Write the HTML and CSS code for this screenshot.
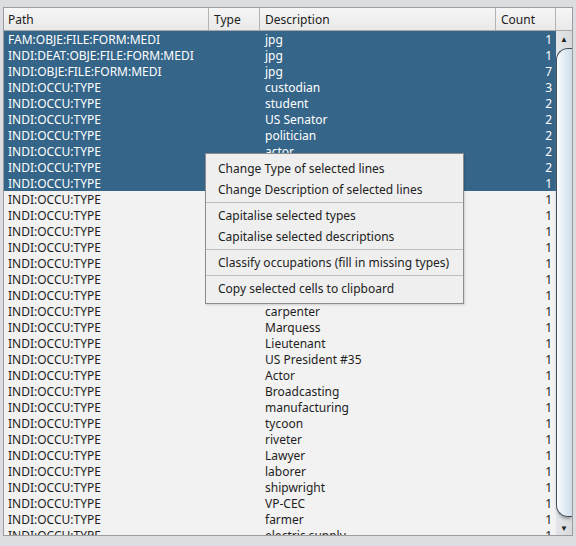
FILE: index.html
```html
<!DOCTYPE html>
<html>
<head>
<meta charset="utf-8">
<link rel="stylesheet" href="styles.css">
</head>
<body>
<div class="frame">
  <div class="header">
    <div class="hcell c-path">Path</div>
    <div class="hcell c-type">Type</div>
    <div class="hcell c-desc">Description</div>
    <div class="hcell c-count">Count</div>
    <div class="hcell c-corner"></div>
  </div>
  <div class="body">
    <div class="rows">
      <div class="row sel"><span class="c-path">FAM:OBJE:FILE:FORM:MEDI</span><span class="c-type"></span><span class="c-desc">jpg</span><span class="c-count">1</span></div>
      <div class="row sel"><span class="c-path">INDI:DEAT:OBJE:FILE:FORM:MEDI</span><span class="c-type"></span><span class="c-desc">jpg</span><span class="c-count">1</span></div>
      <div class="row sel"><span class="c-path">INDI:OBJE:FILE:FORM:MEDI</span><span class="c-type"></span><span class="c-desc">jpg</span><span class="c-count">7</span></div>
      <div class="row sel"><span class="c-path">INDI:OCCU:TYPE</span><span class="c-type"></span><span class="c-desc">custodian</span><span class="c-count">3</span></div>
      <div class="row sel"><span class="c-path">INDI:OCCU:TYPE</span><span class="c-type"></span><span class="c-desc">student</span><span class="c-count">2</span></div>
      <div class="row sel"><span class="c-path">INDI:OCCU:TYPE</span><span class="c-type"></span><span class="c-desc">US Senator</span><span class="c-count">2</span></div>
      <div class="row sel"><span class="c-path">INDI:OCCU:TYPE</span><span class="c-type"></span><span class="c-desc">politician</span><span class="c-count">2</span></div>
      <div class="row sel"><span class="c-path">INDI:OCCU:TYPE</span><span class="c-type"></span><span class="c-desc">actor</span><span class="c-count">2</span></div>
      <div class="row sel"><span class="c-path">INDI:OCCU:TYPE</span><span class="c-type"></span><span class="c-desc">engineer</span><span class="c-count">2</span></div>
      <div class="row sel"><span class="c-path">INDI:OCCU:TYPE</span><span class="c-type"></span><span class="c-desc">clerk</span><span class="c-count">1</span></div>
      <div class="row"><span class="c-path">INDI:OCCU:TYPE</span><span class="c-type"></span><span class="c-desc">teacher</span><span class="c-count">1</span></div>
      <div class="row"><span class="c-path">INDI:OCCU:TYPE</span><span class="c-type"></span><span class="c-desc">lawyer</span><span class="c-count">1</span></div>
      <div class="row"><span class="c-path">INDI:OCCU:TYPE</span><span class="c-type"></span><span class="c-desc">banker</span><span class="c-count">1</span></div>
      <div class="row"><span class="c-path">INDI:OCCU:TYPE</span><span class="c-type"></span><span class="c-desc">writer</span><span class="c-count">1</span></div>
      <div class="row"><span class="c-path">INDI:OCCU:TYPE</span><span class="c-type"></span><span class="c-desc">soldier</span><span class="c-count">1</span></div>
      <div class="row"><span class="c-path">INDI:OCCU:TYPE</span><span class="c-type"></span><span class="c-desc">merchant</span><span class="c-count">1</span></div>
      <div class="row"><span class="c-path">INDI:OCCU:TYPE</span><span class="c-type"></span><span class="c-desc">nurse</span><span class="c-count">1</span></div>
      <div class="row"><span class="c-path">INDI:OCCU:TYPE</span><span class="c-type"></span><span class="c-desc">carpenter</span><span class="c-count">1</span></div>
      <div class="row"><span class="c-path">INDI:OCCU:TYPE</span><span class="c-type"></span><span class="c-desc">Marquess</span><span class="c-count">1</span></div>
      <div class="row"><span class="c-path">INDI:OCCU:TYPE</span><span class="c-type"></span><span class="c-desc">Lieutenant</span><span class="c-count">1</span></div>
      <div class="row"><span class="c-path">INDI:OCCU:TYPE</span><span class="c-type"></span><span class="c-desc">US President #35</span><span class="c-count">1</span></div>
      <div class="row"><span class="c-path">INDI:OCCU:TYPE</span><span class="c-type"></span><span class="c-desc">Actor</span><span class="c-count">1</span></div>
      <div class="row"><span class="c-path">INDI:OCCU:TYPE</span><span class="c-type"></span><span class="c-desc">Broadcasting</span><span class="c-count">1</span></div>
      <div class="row"><span class="c-path">INDI:OCCU:TYPE</span><span class="c-type"></span><span class="c-desc">manufacturing</span><span class="c-count">1</span></div>
      <div class="row"><span class="c-path">INDI:OCCU:TYPE</span><span class="c-type"></span><span class="c-desc">tycoon</span><span class="c-count">1</span></div>
      <div class="row"><span class="c-path">INDI:OCCU:TYPE</span><span class="c-type"></span><span class="c-desc">riveter</span><span class="c-count">1</span></div>
      <div class="row"><span class="c-path">INDI:OCCU:TYPE</span><span class="c-type"></span><span class="c-desc">Lawyer</span><span class="c-count">1</span></div>
      <div class="row"><span class="c-path">INDI:OCCU:TYPE</span><span class="c-type"></span><span class="c-desc">laborer</span><span class="c-count">1</span></div>
      <div class="row"><span class="c-path">INDI:OCCU:TYPE</span><span class="c-type"></span><span class="c-desc">shipwright</span><span class="c-count">1</span></div>
      <div class="row"><span class="c-path">INDI:OCCU:TYPE</span><span class="c-type"></span><span class="c-desc">VP-CEC</span><span class="c-count">1</span></div>
      <div class="row"><span class="c-path">INDI:OCCU:TYPE</span><span class="c-type"></span><span class="c-desc">farmer</span><span class="c-count">1</span></div>
      <div class="row"><span class="c-path">INDI:OCCU:TYPE</span><span class="c-type"></span><span class="c-desc">electric supply</span><span class="c-count">1</span></div>
    </div>
    <div class="vscroll">
      <div class="arrow up">▲</div>
      <div class="track"><div class="thumb"></div></div>
      <div class="arrow down">▼</div>
    </div>
  </div>
</div>
<div class="menu">
  <div class="item">Change Type of selected lines</div>
  <div class="item">Change Description of selected lines</div>
  <div class="sep"></div>
  <div class="item">Capitalise selected types</div>
  <div class="item">Capitalise selected descriptions</div>
  <div class="sep"></div>
  <div class="item">Classify occupations (fill in missing types)</div>
  <div class="sep"></div>
  <div class="item">Copy selected cells to clipboard</div>
</div>
</body>
</html>
```
FILE: styles.css
```css
html, body {
  margin: 0;
  padding: 0;
  background: #dcdde0;
  font-family: "Noto Sans", "Open Sans", sans-serif;
  font-size: 12px;
  color: #1e1e1e;
}
body {
  position: relative;
  width: 576px;
  height: 546px;
  overflow: hidden;
}
.frame {
  margin: 7px 0 0 3px;
  width: 570px;
  height: 529px;
  box-sizing: border-box;
  border: 1px solid #9c9c9c;
  background: #f2f2f2;
  display: flex;
  flex-direction: column;
  overflow: hidden;
}
.header {
  display: flex;
  height: 23px;
  box-sizing: border-box;
  border-bottom: 1px solid #a8a8a8;
  background: linear-gradient(#f6f6f6, #e9e9e9);
  flex: none;
}
.hcell {
  box-sizing: border-box;
  border-right: 1px solid #b4b4b4;
  padding-top: 1px;
  line-height: 21px;
  white-space: nowrap;
  overflow: hidden;
  color: #202020;
}
.c-path { width: 205px; padding-left: 4px; }
.c-type { width: 51px; padding-left: 5px; }
.c-desc { width: 236px; padding-left: 5px; }
.c-count { width: 60px; padding-left: 5px; }
.c-corner { width: 16px; border-right: none; }
.body {
  flex: 1;
  display: flex;
  min-height: 0;
}
.rows {
  width: 552px;
  flex: none;
  overflow: hidden;
}
.row {
  display: flex;
  height: 16px;
  box-sizing: border-box;
  padding-top: 1px;
  line-height: 16px;
  white-space: nowrap;
  color: #1e1e1e;
}
.row span {
  box-sizing: border-box;
  display: block;
  height: 15px;
}
.row .c-count {
  text-align: right;
  padding-left: 0;
  padding-right: 4px;
}
.row.sel {
  background: #356589;
  color: #ffffff;
}
.vscroll {
  width: 16px;
  flex: none;
  display: flex;
  flex-direction: column;
  background: linear-gradient(to right, #e4e5e8, #d8dadd);
}
.arrow {
  height: 15px;
  flex: none;
  font-size: 8px;
  line-height: 15px;
  text-align: center;
  color: #222;
}
.track {
  flex: 1;
  display: flex;
  flex-direction: column;
  padding: 2px 0 3px 0;
}
.thumb {
  flex: 1;
  border: 1px solid #3e4f60;
  border-right: none;
  border-radius: 12px 0 0 12px;
  background: linear-gradient(to right, #ffffff 0%, #eaf1f7 30%, #cfdde9 100%);
  box-shadow: 0 3px 3px -1px #9a9ca0;
}
.menu {
  position: absolute;
  left: 205px;
  top: 153px;
  width: 259px;
  box-sizing: border-box;
  border: 1px solid #8c8c8c;
  background: #efefef;
  padding: 4px 0;
  box-shadow: 1px 1px 2px rgba(0,0,0,0.15);
}
.item {
  height: 21px;
  line-height: 21px;
  padding-left: 12px;
  white-space: nowrap;
  color: #222;
}
.sep {
  height: 5px;
  position: relative;
}
.sep::after {
  content: "";
  position: absolute;
  left: 0;
  right: 0;
  top: 2px;
  height: 1px;
  background: #bdbdbd;
}
```
